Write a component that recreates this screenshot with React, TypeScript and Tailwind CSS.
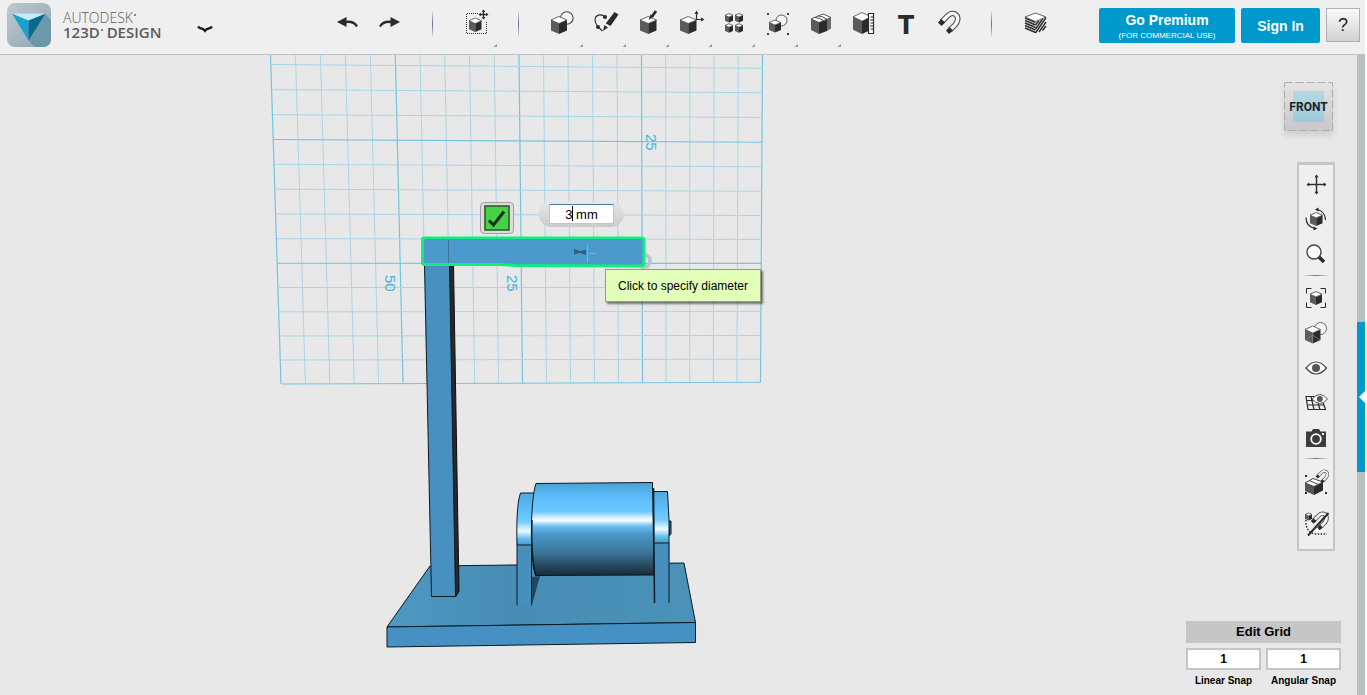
import type { ReactNode } from 'react';

const DARK = '#2b2b2b';

type CubeProps = { x: number; y: number; w: number; h: number };

function Cube({ x, y, w, h }: CubeProps) {
  const mid = x + w / 2;
  const right = x + w;
  const q = h * 0.2;
  const bottom = y + h;
  return (
    <g strokeLinejoin="round">
      <path d={`M${x} ${y + q}L${mid} ${y + 2 * q}V${bottom}L${x} ${bottom - q}Z`} fill="#5c5c5c" />
      <path d={`M${mid} ${y + 2 * q}L${right} ${y + q}V${bottom - q}L${mid} ${bottom}Z`} fill={DARK} />
      <path
        d={`M${mid} ${y}L${right} ${y + q}L${mid} ${y + 2 * q}L${x} ${y + q}Z`}
        fill="#fff"
        stroke="#444"
        strokeWidth="0.8"
      />
    </g>
  );
}

function MoveArrows({ x, y, r, head }: { x: number; y: number; r: number; head: number }) {
  return (
    <g transform={`translate(${x} ${y})`}>
      {[0, 90, 180, 270].map((angle) => (
        <g key={angle} transform={`rotate(${angle})`}>
          <path d={`M0 0V${-r + 1}`} stroke={DARK} strokeWidth="1.4" />
          <path d={`M0 ${-r}L${head} ${-r + head * 1.4}H${-head}Z`} fill={DARK} />
        </g>
      ))}
    </g>
  );
}

function Magnet({ transform }: { transform?: string }) {
  const d = 'M14.5 22L20.5 16C24 12 29 13 30.500 17C31.500 20.500 30 22.500 28.500 24.500L23 30';
  return (
    <g transform={transform} fill="none">
      <path d={d} stroke="#5a5a5a" strokeWidth="5.600" />
      <path d={d} stroke="#f8f8f8" strokeWidth="3.200" />
      <path d="M11 22.500L14.500 19L18 22.500L14.500 26ZM19 30.500L22.500 27L26 30.500L22 34Z" fill={DARK} />
    </g>
  );
}

type Tool = { label: string; menu?: boolean; icon: ReactNode };

const undoTools: Tool[] = [
  {
    label: 'Undo',
    icon: (
      <>
        <path d="M20 22C26 21 30 23 32 26.500" fill="none" stroke={DARK} strokeWidth="2.400" />
        <path d="M12 22L21.500 17V27Z" fill={DARK} />
      </>
    ),
  },
  {
    label: 'Redo',
    icon: (
      <>
        <path d="M24 22C18 21 14 23 12 26.500" fill="none" stroke={DARK} strokeWidth="2.400" />
        <path d="M32 22L22.500 17V27Z" fill={DARK} />
      </>
    ),
  },
];

const transformTools: Tool[] = [
  {
    label: 'Transform',
    menu: true,
    icon: (
      <>
        <path d="M24 13.500H12.500V33.500H32.500V21" fill="none" stroke={DARK} strokeDasharray="1 1" />
        <Cube x={15} y={18} w={12.500} h={14} />
        <MoveArrows x={29.500} y={14.500} r={5} head={1.800} />
      </>
    ),
  },
];

const modelTools: Tool[] = [
  {
    label: 'Primitives',
    menu: true,
    icon: (
      <>
        <circle cx="26.800" cy="18" r="6.300" fill="#f6f6f6" stroke="#444" strokeWidth="1.100" />
        <Cube x={11} y={16.500} w={16} h={17.500} />
      </>
    ),
  },
  {
    label: 'Sketch',
    menu: true,
    icon: (
      <>
        <path d="M22 17C18 13 12 15 12 20C12 23 13.500 25 15 27L19.500 31" fill="none" stroke={DARK} strokeWidth="1.100" />
        <circle cx="22" cy="17" r="2" fill={DARK} />
        <circle cx="15" cy="27" r="2" fill={DARK} />
        <path d="M20 31L21.500 25L25 27.500Z" fill={DARK} />
        <path d="M22.800 23.500L31.500 12L35.500 14.500L27.500 26Z" fill={DARK} />
        <path d="M22.500 24.500L26.500 27.500" stroke="#efefef" strokeWidth="1.200" />
      </>
    ),
  },
  {
    label: 'Construct',
    menu: true,
    icon: (
      <>
        <Cube x={14} y={16.500} w={16.500} h={17.500} />
        <path d="M22.500 20L24.500 14.500L28 16.500Z" fill={DARK} />
        <path d="M26 16.500L30 11" stroke={DARK} strokeWidth="2.800" />
      </>
    ),
  },
  {
    label: 'Modify',
    menu: true,
    icon: (
      <>
        <Cube x={11} y={16.500} w={16.500} h={17.500} />
        <path d="M27.500 20V13M27 19.500H33" stroke={DARK} strokeWidth="1.200" />
        <path d="M27.500 10.500L29.500 14H25.500ZM35.500 19.500L32 17.500V21.500Z" fill={DARK} />
      </>
    ),
  },
  {
    label: 'Pattern',
    menu: true,
    icon: (
      <>
        <Cube x={13} y={13.500} w={8} h={9} />
        <Cube x={23} y={13.500} w={8} h={9} />
        <Cube x={13} y={23.700} w={8} h={9} />
        <Cube x={23} y={23.700} w={8} h={9} />
      </>
    ),
  },
  {
    label: 'Grouping',
    menu: true,
    icon: (
      <>
        <circle cx="26.500" cy="20.500" r="5.500" fill="#f6f6f6" stroke="#555" />
        <Cube x={14} y={20} w={12} h={12.500} />
        <path d="M12 13h2v2h-2zM32 13h2v2h-2zM12 33h2v2h-2zM32 33h2v2h-2z" fill="#444" />
      </>
    ),
  },
  {
    label: 'Combine',
    menu: true,
    icon: (
      <g strokeLinejoin="round">
        <path d="M13 19L21 22.500V34L13 30Z" fill="#5c5c5c" />
        <path d="M21 22.500L29 19.500V31L21 34Z" fill={DARK} />
        <path d="M29 19.500L33 17.500V28.500L29 31Z" fill="#6b6b6b" />
        <path d="M13 19L25 14L33 17.500L21 22.500Z" fill="#fff" stroke="#444" strokeWidth="0.900" />
        <path d="M17 17.500L22 18.500L25 20.500M20.500 16L25 17L29 19.500" fill="none" stroke="#333" strokeWidth="0.900" />
      </g>
    ),
  },
  {
    label: 'Measure',
    icon: (
      <>
        <Cube x={12} y={12.500} w={18} h={21.500} />
        <path d="M27.500 13.500H32.500V33.500H27.500Z" fill="#fff" stroke={DARK} strokeWidth="1.200" />
        <path d="M29.500 17H32M29 20H32M29.500 23H32M29 26H32M29.500 29H32" stroke={DARK} />
      </>
    ),
  },
  {
    label: 'Text',
    icon: (
      <text x="22" y="34" textAnchor="middle" fontSize="26" fontWeight="800" fontFamily="Inter, sans-serif" fill={DARK}>
        T
      </text>
    ),
  },
  { label: 'Snap', icon: <Magnet /> },
];

const layerTools: Tool[] = [
  {
    label: 'Materials',
    icon: (
      <>
        <path d="M12 17L22.500 22V34L12 29Z" fill="#f2f2f2" />
        <path d="M22.500 22L33 17V29L22.500 34Z" fill="#f2f2f2" />
        <path
          d="M12 18L22.500 22.500M12 20.500L22.500 25M12 23L22.500 27.500M12 25.500L22.500 30M12 28L22.500 32.500"
          stroke={DARK}
          strokeWidth="1.400"
        />
        <path
          d="M22.500 25L26 20.500M22.500 29L29.500 19M22.500 33L33 17.500M26 32L33 22M29.500 30.500L33 26"
          stroke={DARK}
          strokeWidth="1.400"
        />
        <path d="M22.500 13L33 17L22.500 21.500L12 17Z" fill="#fff" stroke="#555" strokeWidth="0.900" />
      </>
    ),
  },
];

function ToolButtons({ tools }: { tools: Tool[] }) {
  return (
    <>
      {tools.map((tool) => (
        <button key={tool.label} type="button" aria-label={tool.label} className="w-[43px] h-12 shrink-0">
          <svg className="w-full h-full" viewBox="0 0 43 48">
            {tool.icon}
            {tool.menu && <path d="M43 44V47H39.500Z" fill="#9a9a9a" />}
          </svg>
        </button>
      ))}
    </>
  );
}

function ToolDivider() {
  return (
    <div className="w-[43px] h-12 shrink-0 flex justify-center pt-3">
      <div className="w-px h-6 bg-linear-to-b from-gray-300 via-gray-500 to-gray-300" />
    </div>
  );
}

function Mark() {
  return <span className="inline-block align-top w-[2px] h-[2px] mt-1 ml-px rounded-full bg-[#5c5c5c]" />;
}

function Header() {
  return (
    <header className="flex h-[55px] shrink-0 bg-[#efefef] border-b border-[#bfc2c2] font-['Liberation_Sans',sans-serif]">
      <div className="w-[325px] shrink-0 flex items-start pl-[7px] pt-[3px]">
        <svg className="w-11 h-11" viewBox="0 0 44 44">
          <defs>
            <linearGradient id="logo-bg" x1="0" y1="0" x2="1" y2="1">
              <stop offset="0" stopColor="#bfc9d0" />
              <stop offset="1" stopColor="#8ea5b1" />
            </linearGradient>
          </defs>
          <rect width="44" height="44" rx="8" fill="url(#logo-bg)" />
          <path d="M38 11L44 17V36C44 41 41 44 36 44H28L21 37Z" fill="#6c98aa" />
          <path d="M5 10.500L21.500 17V37.500Z" fill="#1aa0cf" />
          <path d="M38.500 10.500L21.500 17V37.500Z" fill="#086a8c" />
          <path d="M5 10.500H38.500L21.500 17.500Z" fill="#c2ebf8" />
        </svg>
        <div className="ml-3 pt-[7px] w-[128px] font-['Open_Sans',sans-serif] leading-[15px] text-[#5c5c5c]">
          <div className="text-sm leading-[15px] font-light">
            AUTODESK
            <Mark />
          </div>
          <div className="text-[15px] leading-[15px] font-semibold">
            123D
            <Mark /> DESIGN
          </div>
        </div>
        <button type="button" aria-label="Main menu" className="ml-1 mt-5 w-5 h-3">
          <svg className="w-5 h-3" viewBox="0 0 20 12">
            <path
              d="M3 3.500Q4.500 5.500 6.500 5.500Q8.500 5.800 10 7.800Q11.500 5.800 13.500 5.500Q15.500 5.500 17 3.500"
              fill="none"
              stroke="#1d1d1d"
              strokeWidth="2.400"
            />
          </svg>
        </button>
      </div>

      <div className="flex">
        <ToolButtons tools={undoTools} />
        <ToolDivider />
        <ToolButtons tools={transformTools} />
        <ToolDivider />
        <ToolButtons tools={modelTools} />
        <ToolDivider />
        <ToolButtons tools={layerTools} />
      </div>

      <div className="ml-auto flex gap-[6px] pt-2 pr-[5px]">
        <button type="button" className="w-[136px] h-[35px] rounded-xs bg-[#0099cc] text-white">
          <span className="block pt-px text-sm leading-[19px] font-bold">Go Premium</span>
          <span className="block text-[8px] leading-3 whitespace-nowrap">(FOR COMMERCIAL USE)</span>
        </button>
        <button type="button" className="w-[79px] h-[35px] rounded-xs bg-[#0099cc] text-white text-sm font-bold">
          Sign In
        </button>
        <button
          type="button"
          aria-label="Help"
          className="w-[34px] h-[34px] border border-[#b0b0b0] bg-linear-to-b from-[#fafafa] to-[#d2d2d2] text-lg text-[#222]"
        >
          ?
        </button>
      </div>
    </header>
  );
}

// screen positions of the major grid lines on the top and bottom edge
const topMajors = [270.5, 395.3, 519, 641.5, 762.5];
const bottomMajors = [281, 403, 522.5, 642.5, 760.5];
// left and right height of each line going across
const rows = [
  [64.5, 68.3],
  [89.7, 92.7],
  [114.7, 117.5],
  [139.5, 142.3],
  [164.3, 166.8],
  [189.2, 191.3],
  [214, 215.5],
  [238.7, 239.4],
  [263.3, 263.4],
  [287.5, 287.4],
  [311.8, 311.4],
  [336, 335.4],
  [360, 359.2],
  [384, 382.3],
];

function WorkGrid() {
  const columns = Array.from({ length: 21 }, (_, i) => {
    const n = Math.min(Math.floor(i / 5), 3);
    const t = (i - n * 5) / 5;
    return {
      top: topMajors[n] + (topMajors[n + 1] - topMajors[n]) * t,
      bottom: bottomMajors[n] + (bottomMajors[n + 1] - bottomMajors[n]) * t,
      end: 384 - i * 0.085,
      major: i % 5 === 0,
    };
  });
  return (
    <g>
      {columns.map((c, i) => (
        <path
          key={i}
          d={`M${c.top} 55L${c.bottom} ${c.end}`}
          stroke={c.major ? '#74c4e0' : '#a9d6e6'}
          strokeWidth={c.major ? 1.2 : 1}
        />
      ))}
      {rows.map(([left, right], i) => (
        <path
          key={i}
          d={`M${271 + (left - 55) * 0.032} ${left}L${762.5 - (right - 55) * 0.006} ${right}`}
          stroke={i % 5 === 3 ? '#74c4e0' : '#a9d6e6'}
          strokeWidth={i % 5 === 3 ? 1.1 : 1}
        />
      ))}
      <g fill="#45b4dc" fontSize="15" fontFamily="'Liberation Sans', sans-serif">
        <text transform="translate(646 134) rotate(90)">25</text>
        <text transform="translate(507 275) rotate(90)">25</text>
        <text transform="translate(385 275) rotate(90)">50</text>
      </g>
    </g>
  );
}

function Scene() {
  return (
    <svg className="absolute left-0 top-0 w-[780px] h-[640px]" viewBox="0 55 780 640" fill="none">
      <defs>
        <linearGradient id="drum" x1="0" y1="0" x2="0" y2="1">
          <stop offset="0" stopColor="#4a9fd4" />
          <stop offset="0.100" stopColor="#57b4ee" />
          <stop offset="0.200" stopColor="#60c0fd" />
          <stop offset="0.310" stopColor="#6cc6fd" />
          <stop offset="0.380" stopColor="#d8f2ff" />
          <stop offset="0.410" stopColor="#f4fbff" />
          <stop offset="0.470" stopColor="#6bbff0" />
          <stop offset="0.560" stopColor="#4797c9" />
          <stop offset="0.750" stopColor="#3a7699" />
          <stop offset="1" stopColor="#182a36" />
        </linearGradient>
        <linearGradient id="bracket" x1="0" y1="0" x2="0" y2="1">
          <stop offset="0" stopColor="#4fa6de" />
          <stop offset="0.350" stopColor="#60c0fd" />
          <stop offset="0.550" stopColor="#74cbfc" />
          <stop offset="0.730" stopColor="#f0fbff" />
          <stop offset="0.880" stopColor="#66bdf0" />
          <stop offset="1" stopColor="#4b9aca" />
        </linearGradient>
        <linearGradient id="plate" x1="0" y1="0" x2="1" y2="0">
          <stop offset="0" stopColor="#4e98c2" />
          <stop offset="0.400" stopColor="#478db5" />
          <stop offset="1" stopColor="#4b92b8" />
        </linearGradient>
      </defs>

      <WorkGrid />

      <g stroke="#0b1a24" strokeLinejoin="round">
        <path d="M430 566L684 563L695.500 622.500L387 627Z" fill="url(#plate)" />
        <path d="M387 627L695.500 622.500V642.500L387 647Z" fill="#4691c3" />
      </g>

      {/* post */}
      <path d="M449 264H453.500L459 591L455.500 597Z" fill="#252a2d" stroke="#0c0c0c" />
      <path d="M424.500 264H449.500L455.500 596.500H431.500Z" fill="#4790c0" stroke="#0b1a24" />

      {/* left bracket */}
      <path d="M531 577L540 576L532 605Z" fill="#23465b" />
      <path d="M517 545H532V605H517Z" fill="#4790bd" />
      <path d="M516.500 545C516.500 522 517 503 520.500 493H534V545Z" fill="url(#bracket)" />
      <path d="M517 605.500V545C516.500 522 517 503 520.500 493H534M517 545H532M531.500 545V605.500" stroke="#0b1a24" />

      {/* drum */}
      <path
        d="M536 483.500L652.500 482.500L654 575L535.500 575.500C530 560 530 500 536 483.500Z"
        fill="url(#drum)"
        stroke="#0b1a24"
      />
      <path d="M532 520C531 545 532.500 564 536 576" stroke="#0b1a24" strokeWidth="1.500" />

      {/* right bracket */}
      <path d="M669 521H671V534L669 536Z" fill="#3378a0" stroke="#0b1a24" />
      <path d="M654.500 543H669.500V603H654.500Z" fill="#4790bd" />
      <path d="M653.500 491.500H667.500L669 520V543H654.500Z" fill="url(#bracket)" />
      <path d="M653.500 491.500H667.500L669 520V603M654.500 543H669" stroke="#0b1a24" />
      <path d="M653.500 488L654.500 603" stroke="#0b1a24" strokeWidth="1.500" />

      {/* selected arm */}
      <circle cx="644" cy="261" r="6" stroke="#b7c5cf" strokeWidth="4" />
      <path
        d="M424 238H642Q644 238 644 240V265L642 266L515 265.500L500 264.500H424Q422.500 264.500 422.500 262V240Q422.500 238 424 238Z"
        fill="#4b9acb"
      />
      <path d="M425 239.500H642M448.500 240V263" stroke="#35779f" />
      <path
        d="M424 238H642Q644 238 644 240V265L642 266L515 265.500L500 264.500H424Q422.500 264.500 422.500 262V240Q422.500 238 424 238Z"
        stroke="#12ee7e"
        strokeWidth="3"
        strokeLinejoin="round"
      />
      <circle cx="580" cy="252" r="7" stroke="#3ba0d2" strokeWidth="2" />
      <path d="M574 249L580 251L586 249.500V255L580 253L574 254.500Z" fill="#365f7d" />
      <path d="M587.500 244V262M589 253.500H596" stroke="#76b3d8" />
    </svg>
  );
}

const viewTools: Tool[][] = [
  [
    { label: 'Pan', icon: <MoveArrows x={17.500} y={17.500} r={10} head={2} /> },
    {
      label: 'Orbit',
      icon: (
        <>
          <Cube x={11} y={10.500} w={12.500} h={13.500} />
          <path d="M18 7.500C23 8.500 26.500 12.500 26.500 18M7 15.500C7 21 10 25 15.500 26.500" fill="none" stroke={DARK} strokeWidth="1.200" />
          <path d="M16 7.500L19.500 5.500V9.500ZM18.500 26.500L14.500 28.500V24.500Z" fill={DARK} />
        </>
      ),
    },
    {
      label: 'Zoom',
      icon: (
        <>
          <path d="M20 20L25 25" stroke={DARK} strokeWidth="3.600" />
          <circle cx="15" cy="15" r="7" fill="#fafafa" stroke="#444" strokeWidth="1.400" />
        </>
      ),
    },
  ],
  [
    {
      label: 'Fit',
      icon: (
        <>
          <path d="M12.500 8.500H7.500V13.500M21.500 8.500H26.500V13.500M12.500 27.500H7.500V22.500M21.500 27.500H26.500V22.500" fill="none" stroke={DARK} />
          <Cube x={11} y={11.500} w={12} h={13.500} />
        </>
      ),
    },
    {
      label: 'Materials and outlines',
      icon: (
        <>
          <circle cx="21.500" cy="13.500" r="6" fill="#f8f8f8" stroke="#666" />
          <Cube x={6} y={11} w={15.500} h={17.500} />
          <path d="M13.700 18.500V28M13.700 20L6.500 25M13.700 20L21 25" stroke="#8a8a8a" strokeWidth="0.700" />
        </>
      ),
    },
    {
      label: 'Visibility',
      icon: (
        <>
          <path d="M7 18Q17 6 27.500 18Q17 30 7 18Z" fill="#fcfcfc" stroke="#444" strokeWidth="1.200" />
          <circle cx="17" cy="18" r="4" fill="#555" />
        </>
      ),
    },
    {
      label: 'Grid visibility',
      icon: (
        <>
          <path
            d="M7 11.500H22L26.500 24.500H9ZM7.700 15.500H24M8.300 20H25.500M12 11.500L15 24.500M17 11.500L21 24.500"
            fill="none"
            stroke={DARK}
            strokeWidth="1.200"
          />
          <path d="M13 14Q21 5 28.500 14Q21 23 13 14Z" fill="#fcfcfc" stroke="#555" />
          <circle cx="20.800" cy="14" r="3" fill="#555" />
        </>
      ),
    },
    {
      label: 'Screenshot',
      icon: (
        <>
          <path d="M7 11.500H12.500L14 9H20L21.500 11.500H27V27H7Z" fill="#3c3c3c" />
          <circle cx="17" cy="19" r="4.800" fill="#3c3c3c" stroke="#fff" strokeWidth="1.800" />
          <path d="M23 13h2v2h-2z" fill="#fff" />
        </>
      ),
    },
  ],
  [
    {
      label: 'Snap to faces',
      icon: (
        <>
          <path d="M6 18L15 21.500V30L6 26Z" fill="#555" />
          <path d="M15 21.500L24 17V25.500L15 30Z" fill={DARK} />
          <path d="M6 18L14 13.500L24 17L15 21.500ZM10 15.500L19.500 19.500" fill="#fff" stroke="#444" />
          <Magnet transform="translate(10 -2) scale(0.600)" />
          <path d="M6 10h2v2h-2zM6 27h2v2h-2zM26 27h2v2h-2z" fill={DARK} />
        </>
      ),
    },
    {
      label: 'Disable snapping',
      icon: (
        <>
          <path d="M7 14C6 21 10 27 16 28H28" fill="none" stroke={DARK} strokeWidth="1.400" strokeDasharray="1.500 1.500" />
          <Cube x={6} y={7} w={7} h={7.500} />
          <Magnet transform="translate(3 -3) scale(0.800)" />
          <path d="M29.500 7L9 29.500" stroke={DARK} strokeWidth="2" />
        </>
      ),
    },
  ],
];

function ViewPanel() {
  return (
    <nav
      aria-label="View"
      className="mt-[31px] mr-[6px] w-[38px] border-2 border-t-[3px] border-[#c6c6c6] bg-[#efefef] pt-[2px] pb-2"
    >
      {viewTools.map((group, i) => (
        <div key={i}>
          {i > 0 && (
            <div className="h-2 pt-[3px] px-1">
              <div className="h-px bg-linear-to-r from-transparent via-gray-500 to-transparent" />
            </div>
          )}
          <div className={i === 2 ? 'flex flex-col gap-[6px] pt-[2px]' : 'flex flex-col'}>
            {group.map((tool) => (
              <button key={tool.label} type="button" aria-label={tool.label} className="h-[35px]">
                <svg className="w-full h-full" viewBox="0 0 34 35">
                  {tool.icon}
                </svg>
              </button>
            ))}
          </div>
        </div>
      ))}
    </nav>
  );
}

function SnapField({ id, label }: { id: string; label: string }) {
  return (
    <div className="flex-1 flex flex-col">
      <input
        id={id}
        type="text"
        defaultValue="1"
        className="w-full h-[22px] border-2 border-[#c6c6c6] bg-white text-center text-xs font-bold text-black"
      />
      <label htmlFor={id} className="mt-1 text-center text-[10px] leading-[14px] font-bold text-black whitespace-nowrap">
        {label}
      </label>
    </div>
  );
}

function GridSettings() {
  return (
    <div className="w-[155px] pb-[7px]">
      <button type="button" className="block w-full h-[22px] bg-[#c6c6c6] text-[13px] leading-[22px] font-bold text-black">
        Edit Grid
      </button>
      <div className="mt-[5px] flex gap-[5px]">
        <SnapField id="linear-snap" label="Linear Snap" />
        <SnapField id="angular-snap" label="Angular Snap" />
      </div>
    </div>
  );
}

function ViewCube() {
  return (
    <button
      type="button"
      className="relative mr-2 w-[49px] h-[49px] flex items-center justify-center bg-linear-to-b from-[#e4e4e4] to-[#c8c8c8] shadow-[0_5px_6px_rgba(0,0,0,0.1)]"
    >
      <svg className="absolute inset-0 w-full h-full" viewBox="0 0 49 49">
        <rect x="0.500" y="0.500" width="48" height="48" fill="none" stroke="#adadad" strokeDasharray="8 3" />
      </svg>
      <span className="relative w-[31px] h-[31px] flex items-center justify-center bg-linear-to-b from-[#b4d8e2] to-[#9ccbd8] font-[Roboto,sans-serif] text-xs font-bold text-[#1f1f1f]">
        FRONT
      </span>
    </button>
  );
}

function DiameterPrompt() {
  return (
    <>
      <button
        type="button"
        aria-label="Confirm"
        className="absolute left-[480px] top-[147px] w-[34px] h-8 rounded-sm border border-[#a0a0a0] bg-[#dcdcdc] flex items-center justify-center"
      >
        <svg className="w-[26px] h-[26px]" viewBox="0 0 26 26">
          <rect x="1" y="1" width="24" height="24" fill="#47d147" stroke="#2d5a2d" strokeWidth="1.600" />
          <path d="M5 15.500L9.500 20L20 6.500" fill="none" stroke="#1c2b1c" strokeWidth="3" />
        </svg>
      </button>
      <div className="absolute left-[539px] top-[147px] w-[85px] h-[25px] rounded-full bg-linear-to-b from-[#e6e6e6] to-[#cbcbcb] flex justify-center pt-[2px]">
        <input
          type="text"
          aria-label="Diameter"
          defaultValue="3 mm"
          className="w-[65px] h-[20px] border border-[#a9cbe6] border-t-[#4a7dab] bg-white text-center text-[13px] text-black"
        />
        <span className="absolute left-[33px] top-1 w-px h-[15px] bg-black" />
      </div>
      <div
        role="tooltip"
        className="absolute left-[605px] top-[214px] h-[33px] w-[156px] border border-[#8f9f7e] bg-[#e1ffb9] text-center text-xs leading-8 text-black shadow-[2px_2px_2px_rgba(0,0,0,0.5)]"
      >
        Click to specify diameter
      </div>
    </>
  );
}

export default function App() {
  return (
    <div className="h-screen flex flex-col overflow-hidden bg-white pr-[2px] font-['Liberation_Sans',sans-serif]">
      <Header />
      <div className="flex-1 min-h-0 flex">
        <main className="relative flex-1 flex bg-[#e8e8e8] overflow-hidden">
          <Scene />
          <DiameterPrompt />
          <aside className="ml-auto pr-4 pt-[27px] flex flex-col items-end justify-between">
            <div className="flex flex-col items-end">
              <ViewCube />
              <ViewPanel />
            </div>
            <GridSettings />
          </aside>
        </main>
        <div className="w-2 bg-[#b6c0be]">
          <button
            type="button"
            aria-label="Open side panel"
            className="mt-[267px] w-2 h-[150px] bg-[#0099cc] flex items-center justify-end"
          >
            <svg className="w-[6px] h-3" viewBox="0 0 6 12">
              <path d="M0 6L6 0V12Z" fill="#fff" />
            </svg>
          </button>
        </div>
      </div>
    </div>
  );
}
